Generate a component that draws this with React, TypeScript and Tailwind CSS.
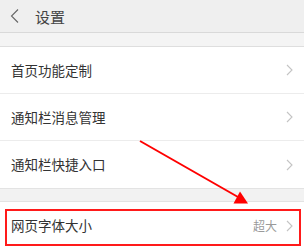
import React from "react";

const Chevron = () => (
  <svg width="7" height="12" viewBox="0 0 7 12" className="shrink-0">
    <path d="M1 1 L6 6 L1 11" fill="none" stroke="#c4c4c4" strokeWidth="1.1" />
  </svg>
);

const Row = ({ label, value, last }: { label: string; value?: string; last?: boolean }) => (
  <div className={`flex items-center h-[47px] pl-[11px] pr-[11px] bg-white ${last ? "" : "border-b border-[#ececec]"}`}>
    <span className="flex-1 text-[13.5px] text-[#333]">{label}</span>
    {value && <span className="text-[12px] text-[#9a9a9a] mr-[9px]">{value}</span>}
    <Chevron />
  </div>
);

export default function App() {
  return (
    <div
      className="relative w-[304px] h-[249px] overflow-hidden bg-white"
      style={{ fontFamily: '"Noto Sans CJK SC", "Noto Sans", sans-serif' }}
    >
      <div className="flex items-center h-[33px] bg-[#efefef] border-b border-[#d9d9d9]">
        <svg width="9" height="14" viewBox="0 0 9 14" className="ml-[10px]">
          <path d="M8 0.5 L1.5 7 L8 13.5" fill="none" stroke="#666" strokeWidth="1.1" />
        </svg>
        <span className="ml-[16px] text-[15px] text-[#444] leading-none">设置</span>
      </div>
      <div className="h-[14px] bg-[#f4f4f4] border-b border-[#dedede]" />
      <Row label="首页功能定制" />
      <Row label="通知栏消息管理" />
      <Row label="通知栏快捷入口" last />
      <div className="h-[14px] bg-[#f2f2f2] border-y border-[#e3e3e3]" />
      <Row label="网页字体大小" value="超大" last />

      <div className="absolute left-[5px] top-[209px] w-[296px] h-[37px] border-2 border-[#ff1a1a]" />
      <svg className="absolute left-0 top-0" width="304" height="249">
        <line x1="140" y1="141" x2="238" y2="197" stroke="#ff0000" strokeWidth="2" />
        <polygon points="248,203.5 240,191.5 233.5,203.5" fill="#ff0000" />
      </svg>
    </div>
  );
}
